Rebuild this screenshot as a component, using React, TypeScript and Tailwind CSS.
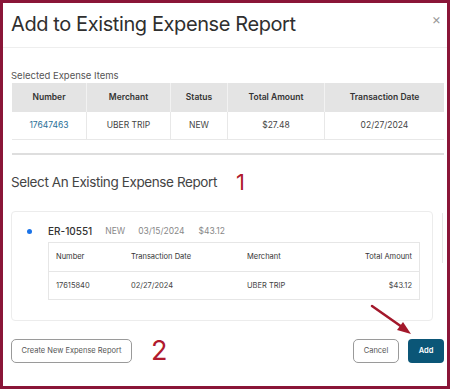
import React from "react"

const selected = [
  { number: "17647463", merchant: "UBER TRIP", status: "NEW", amount: "$27.48", date: "02/27/2024" },
]

const cols = [
  { label: "Number", w: "w-[75px]" },
  { label: "Merchant", w: "w-[84px]" },
  { label: "Status", w: "w-[57px]" },
  { label: "Total Amount", w: "w-[97px]" },
  { label: "Transaction Date", w: "flex-1" },
]

export default function App() {
  const row = selected[0]
  const values = [row.number, row.merchant, row.status, row.amount, row.date]

  return (
    <div className="relative w-[450px] h-[389px] bg-white border-[3px] border-[#8a1538] overflow-hidden font-['Inter','Liberation_Sans',sans-serif] text-[#333]">
      {/* Header */}
      <div className="flex items-start justify-between h-[45px] border-b border-[#eeeeee] pl-[8px] pr-[6px] pt-[7px]">
        <h1 className="text-[20px] leading-[28px] tracking-[-0.4px] text-[#2f2f2f]">Add to Existing Expense Report</h1>
        <span className="text-[14px] leading-[14px] text-[#999] mt-[2px]">×</span>
      </div>

      <div className="pl-[8px] pr-[3px]">
        {/* Selected items */}
        <p className="mt-[21px] text-[9.5px] leading-[14px] text-[#555]">Selected Expense Items</p>
        <div className="ml-[1px]">
          <div className="flex h-[29px] bg-[#e4e4e4]">
            {cols.map((c, i) => (
              <div
                key={c.label}
                className={`${c.w} flex items-center justify-center text-[8.5px] font-semibold text-[#333] ${i < 4 ? "border-r border-[#f2f2f2]" : ""}`}
              >
                {c.label}
              </div>
            ))}
          </div>
          <div className="flex h-[28px] border-b border-[#e8e8e8]">
            {cols.map((c, i) => (
              <div
                key={c.label}
                className={`${c.w} flex items-center justify-center text-[8.5px] ${i === 0 ? "text-[#2a6f97]" : "text-[#444]"} ${i < 4 ? "border-r border-[#e8e8e8]" : ""}`}
              >
                {values[i]}
              </div>
            ))}
          </div>
        </div>

        <div className="mt-[13px] ml-[1px] h-[2px] bg-[#dedede]" />

        {/* Select existing */}
        <div className="flex items-center mt-[15px] h-[24px]">
          <h2 className="text-[13.5px] tracking-[-0.4px] text-[#444]">Select An Existing Expense Report</h2>
          <span className="ml-[19px] text-[22px] leading-[24px] text-[#b01a2e]">1</span>
        </div>

        <div className="flex mt-[17px]">
          <div className="w-[422px] h-[110px] border border-[#ececec] rounded-[4px] pl-[13px] pr-[13px] pt-[11px]">
            <div className="flex items-center h-[16px]">
              <span className="w-[5px] h-[5px] rounded-full bg-[#1a73e8] ml-[2px]" />
              <span className="ml-[16px] text-[10px] font-medium text-[#333]">ER-10551</span>
              <span className="ml-[13px] text-[8.5px] text-[#888]">NEW</span>
              <span className="ml-[13px] text-[8.5px] text-[#888]">03/15/2024</span>
              <span className="ml-[14px] text-[8.5px] text-[#888]">$43.12</span>
            </div>
            <div className="ml-[23px] mt-[3px] w-[372px] border border-[#e6e6e6]">
              <div className="flex items-center h-[29px] border-b border-[#e6e6e6] px-[7px] text-[7.5px] text-[#333]">
                <span className="w-[75px]">Number</span>
                <span className="w-[116px]">Transaction Date</span>
                <span className="flex-1">Merchant</span>
                <span>Total Amount</span>
              </div>
              <div className="flex items-center h-[27px] px-[7px] text-[7.5px] text-[#444]">
                <span className="w-[75px]">17615840</span>
                <span className="w-[116px]">02/27/2024</span>
                <span className="flex-1">UBER TRIP</span>
                <span>$43.12</span>
              </div>
            </div>
          </div>
          <div className="ml-[9px] mt-[2px] w-[1px] h-[50px] bg-[#e6e6e6]" />
        </div>

        {/* Footer */}
        <div className="flex items-center mt-[18px] h-[24px]">
          <button className="w-[121px] h-[24px] border border-[#9a9a9a] rounded-[5px] text-[7.5px] text-[#555]">
            Create New Expense Report
          </button>
          <span className="ml-[19px] text-[27px] leading-[24px] text-[#b01a2e]">2</span>
          <div className="flex-1" />
          <button className="w-[46px] h-[24px] border border-[#9a9a9a] rounded-[5px] text-[7.5px] text-[#555]">Cancel</button>
          <button className="ml-[9px] w-[36px] h-[24px] rounded-[4px] bg-[#0b5677] text-[7.5px] font-semibold text-white">Add</button>
        </div>
      </div>

      {/* Annotation arrow */}
      <svg className="absolute left-0 top-0" width="450" height="389" viewBox="0 0 450 389">
        <line x1="369" y1="303" x2="399" y2="324" stroke="#a3182b" strokeWidth="2.5" strokeLinecap="round" />
        <polygon points="408,331 394,327 400,319" fill="#a3182b" />
      </svg>
    </div>
  )
}
